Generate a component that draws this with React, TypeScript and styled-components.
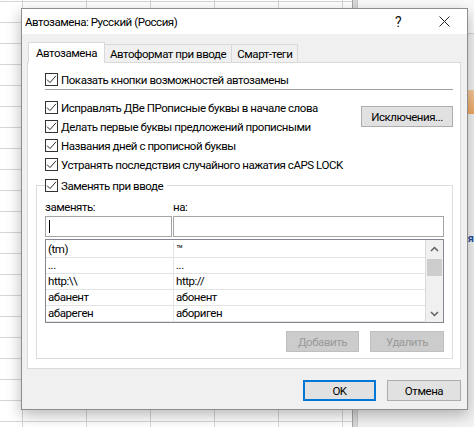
import React from "react";
import styled, { createGlobalStyle } from "styled-components";

const FONT = `Roboto, "Noto Sans", sans-serif`;

const GlobalStyle = createGlobalStyle`
  html, body { margin: 0; padding: 0; background: #ffffff; overflow: hidden; }
  body { font-family: ${FONT}; font-size: 11.5px; letter-spacing: -0.45px; color: #000; }
  * { box-sizing: border-box; }
`;

const Desktop = styled.div`
  position: relative;
  width: 474px;
  height: 427px;
  overflow: hidden;
  display: flex;
`;

const Sheet = styled.div`
  width: 352px;
  height: 100%;
  background-color: #ffffff;
  background-image: linear-gradient(to right, #d6d6d6 1px, transparent 1px),
    linear-gradient(to bottom, #d6d6d6 1px, transparent 1px);
  background-size: 64px 21px, 64px 21px;
  background-position: 22px 0, 0 1px;
`;

const SheetEdge = styled.div`
  width: 6px;
  height: 100%;
  background: #d9d9d9;
  border-left: 1px solid #a6a6a6;
  border-right: 1px solid #c8c8c8;
`;

const SidePane = styled.div`
  flex: 1;
  height: 100%;
  background: #f3f3f3;
  display: flex;
  flex-direction: column;
  align-items: flex-end;
`;

const SideHeader = styled.div`
  width: 100%;
  height: 34px;
  border-bottom: 1px solid #d2d2d2;
  background: #fafafa;
`;

const OrangeTab = styled.div`
  margin-top: 56px;
  width: 10px;
  height: 24px;
  background: linear-gradient(to bottom, #f7c99a, #f2a860);
`;

const SideLetter = styled.span`
  margin-top: 118px;
  color: #1f4e9c;
  font-weight: 700;
  font-size: 11px;
  line-height: 14px;
  letter-spacing: 0;
`;

const Dialog = styled.div`
  position: absolute;
  left: 21px;
  top: 8px;
  width: 447px;
  border: 1px solid #8e8e8e;
  background: #f0f0f0;
  box-shadow: 0 5px 14px rgba(0, 0, 0, 0.28);
  display: flex;
  flex-direction: column;
`;

const TitleBar = styled.div`
  height: 25px;
  background: #ffffff;
  display: flex;
  align-items: center;
  padding-left: 3px;
`;

const TitleText = styled.span`
  flex: 1;
  font-size: 11.5px;
  line-height: 16px;
  white-space: nowrap;
`;

const TitleButton = styled.div`
  width: 46px;
  height: 25px;
  display: flex;
  align-items: center;
  justify-content: center;
  font-size: 14px;
  color: #111;
`;

const Body = styled.div`
  padding: 8px 6px 0 5px;
  display: flex;
  flex-direction: column;
`;

const TabStrip = styled.div`
  height: 21px;
  margin: 0 0 -1px 1px;
  display: flex;
  align-items: flex-end;
  position: relative;
  z-index: 1;
`;

const Tab = styled.div<{ $active?: boolean }>`
  height: ${(p) => (p.$active ? 21 : 19)}px;
  padding: 0 ${(p) => (p.$active ? 7 : 5)}px;
  margin-left: ${(p) => (p.$active ? 0 : -1)}px;
  display: flex;
  align-items: center;
  white-space: nowrap;
  line-height: 16px;
  background: ${(p) => (p.$active ? "#ffffff" : "#f0f0f0")};
  border: 1px solid #d9d9d9;
  border-bottom: ${(p) => (p.$active ? "none" : "1px solid #d9d9d9")};
  position: relative;
  z-index: ${(p) => (p.$active ? 2 : 1)};
`;

const Pane = styled.div`
  height: 307px;
  background: #ffffff;
  border: 1px solid #d9d9d9;
  padding: 0 7px 0 8px;
  display: flex;
  flex-direction: column;
`;

const CheckRow = styled.div<{ $top?: number; $left?: number }>`
  height: 19px;
  display: flex;
  align-items: center;
  gap: 3px;
  margin-top: ${(p) => p.$top ?? 0}px;
  margin-left: ${(p) => p.$left ?? 0}px;
  white-space: nowrap;
  line-height: 16px;
`;

const Box = styled.span`
  width: 13px;
  height: 13px;
  flex: none;
  border: 1px solid #333333;
  background: #ffffff;
  display: inline-flex;
  align-items: center;
  justify-content: center;
`;

const Separator = styled.div`
  height: 1px;
  margin-left: 9px;
  background: #a0a0a0;
`;

const Options = styled.div`
  margin: 8px 0 0 9px;
  display: flex;
  justify-content: space-between;
  align-items: flex-start;
`;

const OptionList = styled.div`
  display: flex;
  flex-direction: column;
`;

const Button = styled.button<{ $w: number; $primary?: boolean }>`
  width: ${(p) => p.$w}px;
  height: 21px;
  padding: 0;
  font-family: ${FONT};
  font-size: 11.5px;
  letter-spacing: -0.45px;
  line-height: 16px;
  color: #000;
  background: #e1e1e1;
  border: ${(p) => (p.$primary ? "2px solid #0078d7" : "1px solid #adadad")};
  white-space: nowrap;
  &:disabled {
    background: #cccccc;
    border-color: #bfbfbf;
    color: #9a9a9a;
  }
`;

const ExceptionsButton = styled(Button)`
  margin-top: 8px;
`;

const Group = styled.div`
  margin-top: 11px;
  border: 1px solid #dcdcdc;
  padding: 0 8px 6px 8px;
  display: flex;
  flex-direction: column;
`;

const Legend = styled(CheckRow)`
  margin-top: -10px;
  align-self: flex-start;
  background: #ffffff;
  padding-right: 4px;
`;

const FieldGrid = styled.div<{ $top: number }>`
  display: grid;
  grid-template-columns: 127px 1fr;
  column-gap: 1px;
  margin-top: ${(p) => p.$top}px;
`;

const FieldLabel = styled.span`
  height: 16px;
  line-height: 16px;
`;

const TextField = styled.div`
  height: 21px;
  border: 1px solid #a5a5a5;
  background: #fff;
  display: flex;
  align-items: center;
  padding-left: 3px;
`;

const Caret = styled.span`
  width: 1px;
  height: 13px;
  background: #000;
`;

const ListBox = styled.div`
  margin-top: 2px;
  height: 84px;
  border: 1px solid #828790;
  background: #ffffff;
  display: flex;
  overflow: hidden;
`;

const Rows = styled.div`
  flex: 1;
  padding-top: 2px;
  border-right: 1px solid #dadada;
  display: flex;
  flex-direction: column;
`;

const Row = styled.div`
  height: 16px;
  flex: none;
  display: grid;
  grid-template-columns: 128px 1fr;
  border-bottom: 1px solid #e3e3e3;
`;

const Cell = styled.span<{ $divider?: boolean }>`
  padding-left: 2px;
  line-height: 15px;
  white-space: nowrap;
  border-right: ${(p) => (p.$divider ? "1px solid #e3e3e3" : "none")};
`;

const ScrollBar = styled.div`
  width: 17px;
  background: #f0f0f0;
  display: flex;
  flex-direction: column;
  align-items: center;
`;

const ScrollArrow = styled.div`
  width: 17px;
  height: 17px;
  display: flex;
  align-items: center;
  justify-content: center;
`;

const Thumb = styled.div`
  width: 15px;
  height: 17px;
  margin-top: 2px;
  background: #cdcdcd;
`;

const ScrollSpace = styled.div`
  flex: 1;
`;

const GroupButtons = styled.div`
  margin-top: 8px;
  display: flex;
  justify-content: flex-end;
  gap: 11px;
`;

const Footer = styled.div`
  margin-top: 11px;
  padding-bottom: 8px;
  display: flex;
  justify-content: flex-end;
  gap: 11px;
`;

const CheckMark = () => (
  <svg width="11" height="11" viewBox="0 0 11 11">
    <path d="M1 5.6 L4 8.6 L10 1.8" fill="none" stroke="#2b2b2b" strokeWidth="1" />
  </svg>
);

const Check: React.FC<{ children: React.ReactNode; top?: number; left?: number }> = ({
  children,
  top,
  left,
}) => (
  <CheckRow $top={top} $left={left}>
    <Box>
      <CheckMark />
    </Box>
    <span>{children}</span>
  </CheckRow>
);

const Chevron: React.FC<{ down?: boolean }> = ({ down }) => (
  <svg width="9" height="6" viewBox="0 0 9 6">
    <path
      d={down ? "M1 1 L4.5 4.5 L8 1" : "M1 5 L4.5 1.5 L8 5"}
      fill="none"
      stroke="#606060"
      strokeWidth="1.5"
    />
  </svg>
);

const entries: [string, string][] = [
  ["(tm)", "™"],
  ["...", "..."],
  ["http:\\\\", "http://"],
  ["абанент", "абонент"],
  ["абареген", "абориген"],
];

export default function App() {
  return (
    <>
      <GlobalStyle />
      <Desktop>
        <Sheet />
        <SheetEdge />
        <SidePane>
          <SideHeader />
          <OrangeTab />
          <SideLetter>я</SideLetter>
        </SidePane>

        <Dialog>
          <TitleBar>
            <TitleText>Автозамена: Русский (Россия)</TitleText>
            <TitleButton>?</TitleButton>
            <TitleButton>
              <svg width="11" height="11" viewBox="0 0 11 11">
                <path d="M0.5 0.5 L10.5 10.5 M10.5 0.5 L0.5 10.5" stroke="#222" strokeWidth="1" />
              </svg>
            </TitleButton>
          </TitleBar>
          <Body>
            <TabStrip>
              <Tab $active>Автозамена</Tab>
              <Tab>Автоформат при вводе</Tab>
              <Tab>Смарт-теги</Tab>
            </TabStrip>
            <Pane>
              <Check top={7} left={9}>
                Показать кнопки возможностей автозамены
              </Check>
              <Separator />
              <Options>
                <OptionList>
                  <Check>Исправлять ДВе ПРописные буквы в начале слова</Check>
                  <Check>Делать первые буквы предложений прописными</Check>
                  <Check>Названия дней с прописной буквы</Check>
                  <Check>Устранять последствия случайного нажатия cAPS LOCK</Check>
                </OptionList>
                <ExceptionsButton $w={92}>Исключения...</ExceptionsButton>
              </Options>
              <Group>
                <Legend>
                  <Box>
                    <CheckMark />
                  </Box>
                  <span>Заменять при вводе</span>
                </Legend>
                <FieldGrid $top={4}>
                  <FieldLabel>заменять:</FieldLabel>
                  <FieldLabel>на:</FieldLabel>
                </FieldGrid>
                <FieldGrid $top={1}>
                  <TextField>
                    <Caret />
                  </TextField>
                  <TextField />
                </FieldGrid>
                <ListBox>
                  <Rows>
                    {entries.map(([from, to]) => (
                      <Row key={from}>
                        <Cell $divider>{from}</Cell>
                        <Cell>{to}</Cell>
                      </Row>
                    ))}
                  </Rows>
                  <ScrollBar>
                    <ScrollArrow>
                      <Chevron />
                    </ScrollArrow>
                    <Thumb />
                    <ScrollSpace />
                    <ScrollArrow>
                      <Chevron down />
                    </ScrollArrow>
                  </ScrollBar>
                </ListBox>
                <GroupButtons>
                  <Button $w={73} disabled>
                    Добавить
                  </Button>
                  <Button $w={74} disabled>
                    Удалить
                  </Button>
                </GroupButtons>
              </Group>
            </Pane>
            <Footer>
              <Button $w={73} $primary>
                OK
              </Button>
              <Button $w={74}>Отмена</Button>
            </Footer>
          </Body>
        </Dialog>
      </Desktop>
    </>
  );
}
